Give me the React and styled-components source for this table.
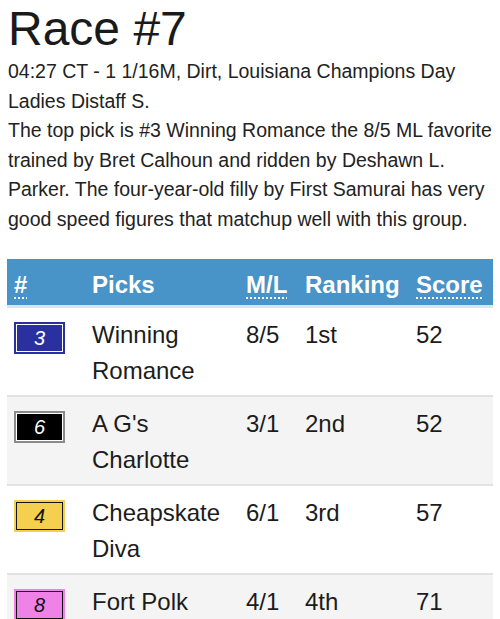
import styled, { createGlobalStyle } from "styled-components";

const picks = [
  { pp: 3, name: "Winning Romance", ml: "8/5", rank: "1st", score: 52, fill: "#2b30a0", ring: "#2b30a0", line: "#ffffff", ink: "#ffffff" },
  { pp: 6, name: "A G's Charlotte", ml: "3/1", rank: "2nd", score: 52, fill: "#000000", ring: "#8a8a8a", line: "#ffffff", ink: "#ffffff" },
  { pp: 4, name: "Cheapskate Diva", ml: "6/1", rank: "3rd", score: 57, fill: "#f5d04f", ring: "#f5d04f", line: "#111111", ink: "#111111" },
  { pp: 8, name: "Fort Polk", ml: "4/1", rank: "4th", score: 71, fill: "#ee82e6", ring: "#ee82e6", line: "#111111", ink: "#111111" },
];

export default function App() {
  return (
    <Page>
      <GlobalStyle />
      <Title>Race #7</Title>
      <Summary>
        04:27 CT - 1 1/16M, Dirt, Louisiana Champions Day
        <br />
        Ladies Distaff S.
        <br />
        The top pick is #3 Winning Romance the 8/5 ML favorite trained by Bret
        Calhoun and ridden by Deshawn L. Parker. The four-year-old filly by
        First Samurai has very good speed figures that matchup well with this
        group.
      </Summary>

      <PicksTable>
        <colgroup>
          <col style={{ width: 78 }} />
          <col style={{ width: 154 }} />
          <col style={{ width: 59 }} />
          <col style={{ width: 111 }} />
          <col style={{ width: 84 }} />
        </colgroup>
        <thead>
          <tr>
            <HeadCell><Abbr title="Program number">#</Abbr></HeadCell>
            <HeadCell>Picks</HeadCell>
            <HeadCell><Abbr title="Morning line">M/L</Abbr></HeadCell>
            <HeadCell>Ranking</HeadCell>
            <HeadCell><Abbr title="Speed score">Score</Abbr></HeadCell>
          </tr>
        </thead>
        <tbody>
          {picks.map((p, i) => (
            <Row key={p.pp} $striped={i % 2 === 1}>
              <Cell>
                <Saddle $fill={p.fill} $ring={p.ring} $line={p.line} $ink={p.ink}>
                  {p.pp}
                </Saddle>
              </Cell>
              <Cell>{p.name}</Cell>
              <Cell>{p.ml}</Cell>
              <Cell>{p.rank}</Cell>
              <Cell>{p.score}</Cell>
            </Row>
          ))}
        </tbody>
      </PicksTable>
    </Page>
  );
}

const GlobalStyle = createGlobalStyle`
  html, body {
    margin: 0;
    padding: 0;
    background: #ffffff;
  }
  body {
    font-family: "Liberation Sans", Arial, sans-serif;
    color: #1c1c1c;
  }
`;

const Page = styled.div`
  width: 500px;
  padding: 0 6px 0 8px;
  box-sizing: border-box;
`;

const Title = styled.h1`
  margin: 5px 0 4px;
  font-family: "Liberation Sans", Arial, sans-serif;
  font-size: 48px;
  line-height: 48px;
  font-weight: 400;
  color: #1a1a1a;
`;

const Summary = styled.p`
  margin: 0 0 25px;
  font-family: "Liberation Sans", Arial, sans-serif;
  font-size: 19.5px;
  line-height: 29.5px;
  color: #222;
`;

const PicksTable = styled.table`
  margin-left: -1px;
  width: 486px;
  border-collapse: collapse;
  table-layout: fixed;
  font-family: "Liberation Sans", Arial, sans-serif;
`;

const HeadCell = styled.th`
  background: #4893c8;
  color: #ffffff;
  font-size: 24px;
  font-weight: 700;
  line-height: 31px;
  text-align: left;
  padding: 10px 7px 5px;
  border-bottom: 3px solid #d8e4ee;
`;

const Abbr = styled.abbr`
  text-decoration: underline dotted;
  text-underline-offset: 4px;
  text-decoration-thickness: 2px;
  cursor: help;
`;

const Row = styled.tr`
  background: ${(p) => (p.$striped ? "#f4f4f4" : "#ffffff")};
  & + & {
    border-top: 2px solid #e2e2e2;
  }
`;

const Cell = styled.td`
  vertical-align: top;
  padding: 9px 7px 6px;
  font-size: 24px;
  line-height: 36px;
  color: #1c1c1c;
`;

const Saddle = styled.span`
  display: block;
  box-sizing: border-box;
  width: 47px;
  height: 28px;
  margin: 7px 2px 0;
  background: ${(p) => p.$fill};
  border: 1px solid ${(p) => p.$line};
  box-shadow: 0 0 0 2px ${(p) => p.$ring};
  color: ${(p) => p.$ink};
  font-size: 20px;
  font-style: italic;
  line-height: 26px;
  text-align: center;
`;
